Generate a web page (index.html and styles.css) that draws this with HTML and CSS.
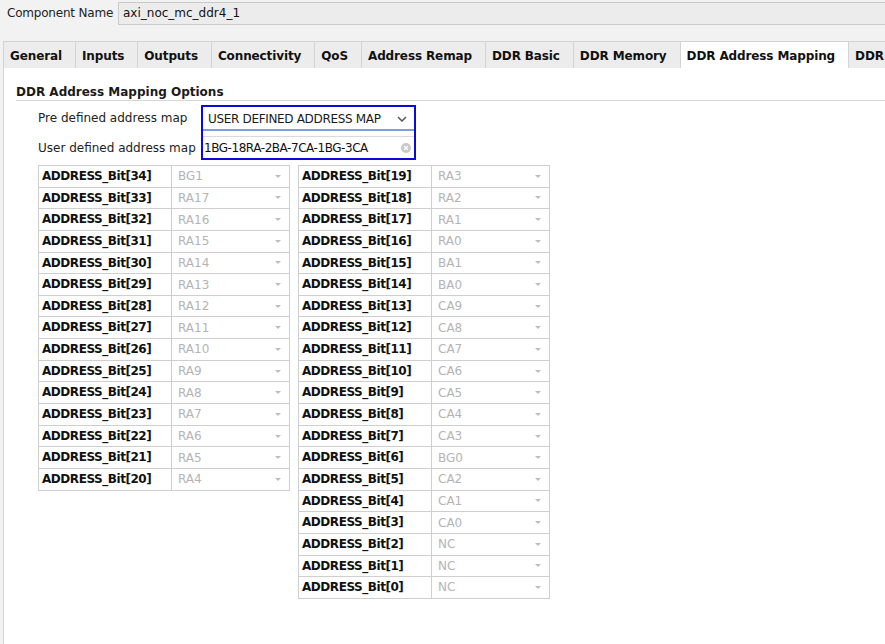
FILE: index.html
```html
<!DOCTYPE html>
<html>
<head>
<meta charset="utf-8">
<link rel="stylesheet" href="styles.css">
</head>
<body>
<div class="app">
  <div class="top">
    <span class="top-label">Component Name</span>
    <div class="top-input">axi_noc_mc_ddr4_1</div>
  </div>
  <div class="tabs">
    <div class="tab">General</div>
    <div class="tab">Inputs</div>
    <div class="tab">Outputs</div>
    <div class="tab">Connectivity</div>
    <div class="tab">QoS</div>
    <div class="tab">Address Remap</div>
    <div class="tab">DDR Basic</div>
    <div class="tab">DDR Memory</div>
    <div class="tab active">DDR Address Mapping</div>
    <div class="tab last">DDR A</div>
  </div>
  <div class="content">
    <div class="section-title">DDR Address Mapping Options</div>
    <div class="form">
      <div class="labels">
        <div class="flabel first">Pre defined address map</div>
        <div class="flabel">User defined address map</div>
      </div>
      <div class="focus-box">
        <div class="select">
          <span class="caps">USER DEFINED ADDRESS MAP</span>
          <svg class="chev" width="10" height="6" viewBox="0 0 10 6"><path d="M1 1 L5 5 L9 1" fill="none" stroke="#555" stroke-width="1.5"/></svg>
        </div>
        <div class="text-input">
          <span class="caps2">1BG-18RA-2BA-7CA-1BG-3CA</span>
          <svg class="clear" width="10" height="10" viewBox="0 0 10 10"><circle cx="5" cy="5" r="5" fill="#c8c8c8"/><path d="M3 3 L7 7 M7 3 L3 7" stroke="#fff" stroke-width="1.3"/></svg>
        </div>
      </div>
    </div>
    <div class="tables" id="tables"></div>
  </div>
</div>
<script src="app.js"></script>
</body>
</html>
```
FILE: app.js
```js
const left = ["BG1","RA17","RA16","RA15","RA14","RA13","RA12","RA11","RA10","RA9","RA8","RA7","RA6","RA5","RA4"];
const right = ["RA3","RA2","RA1","RA0","BA1","BA0","CA9","CA8","CA7","CA6","CA5","CA4","CA3","BG0","CA2","CA1","CA0","NC","NC","NC"];
function build(vals, start) {
  const t = document.createElement("div");
  t.className = "bit-table";
  vals.forEach((v, i) => {
    const r = document.createElement("div");
    r.className = "bit-row";
    r.innerHTML = '<div class="bit-name">ADDRESS_Bit[' + (start - i) + ']</div>' +
      '<div class="bit-val"><span>' + v + '</span><span class="arr"></span></div>';
    t.appendChild(r);
  });
  return t;
}
const host = document.getElementById("tables");
host.appendChild(build(left, 34));
host.appendChild(build(right, 19));
```
FILE: styles.css
```css
* { box-sizing: border-box; }
html, body { margin: 0; padding: 0; }
body {
  width: 885px;
  height: 644px;
  overflow: hidden;
  font-family: "DejaVu Sans", sans-serif;
  font-size: 12px;
  color: #1a1a1a;
  background: #f2f2f2;
}
.app { display: flex; flex-direction: column; height: 644px; }
.top {
  display: flex;
  align-items: center;
  height: 26px;
  padding-left: 7px;
}
.top-label { width: 111px; font-size: 12px; color: #222; letter-spacing: -0.2px; }
.top-input {
  flex: 1;
  height: 23px;
  background: #ececec;
  border: 1px solid #cacaca;
  border-right: none;
  padding: 3px 4px;
  color: #111;
}
.tabs {
  margin-top: 15px;
  margin-left: 3px;
  display: flex;
  height: 27px;
  border-top: 1px solid #d2d2d2;
  background: #ececec;
  overflow: hidden;
  white-space: nowrap;
}
.tab {
  font-weight: bold;
  font-size: 12px;
  padding: 7px 13px 0 6px;
  border-left: 1px solid #d4d4d4;
  color: #111;
  letter-spacing: -0.12px;
}
.tab.active { background: #fff; }
.tab.last { flex: 1; min-width: 0; padding-right: 0; }
.content {
  flex: 1;
  margin-left: 3px;
  background: #fff;
  border-left: 1px solid #d4d4d4;
  padding: 17px 0 0 12px;
}
.section-title {
  font-weight: bold;
  font-size: 12px;
  border-bottom: 1px solid #d6d6d6;
  height: 16px;
  line-height: 15px;
}
.form {
  display: flex;
  margin-top: 4px;
  margin-left: 22px;
}
.labels { width: 163px; }
.flabel { height: 24px; line-height: 24px; color: #222; }
.flabel.first { margin-top: 1px; margin-bottom: 6px; }
.focus-box {
  width: 215px;
  height: 55px;
  border: 2px solid #0a0adc;
  display: flex;
  flex-direction: column;
}
.select {
  height: 24px;
  display: flex;
  align-items: center;
  justify-content: space-between;
  padding: 1px 7px 0 5px;
  border-bottom: 2px solid #7e9fdc;
  background: #fff;
}
.caps { letter-spacing: -0.33px; }
.caps2 { letter-spacing: -0.45px; }
.text-input {
  margin-top: 5px;
  flex: 1;
  border-top: 1px solid #dadada;
  display: flex;
  align-items: center;
  justify-content: space-between;
  padding: 0 2px 0 1px;
  color: #111;
}
.clear { margin-right: 1px; }
.tables {
  display: flex;
  align-items: flex-start;
  gap: 8px;
  margin-top: 5px;
  margin-left: 22px;
}
.bit-table {
  width: 252px;
  border: 1px solid #cfcfcf;
  border-bottom: none;
}
.bit-row {
  display: flex;
  height: 21.65px;
  border-bottom: 1px solid #cfcfcf;
}
.bit-name {
  width: 133px;
  border-right: 1px solid #cfcfcf;
  font-weight: bold;
  padding-left: 3px;
  line-height: 20px;
  color: #111;
  letter-spacing: -0.45px;
}
.bit-val {
  flex: 1;
  display: flex;
  justify-content: space-between;
  align-items: center;
  padding: 0 8px 0 6px;
  color: #b4b4b4;
}
.arr {
  width: 0; height: 0;
  border-left: 3px solid transparent;
  border-right: 3px solid transparent;
  border-top: 3px solid #bdbdbd;
}
```
